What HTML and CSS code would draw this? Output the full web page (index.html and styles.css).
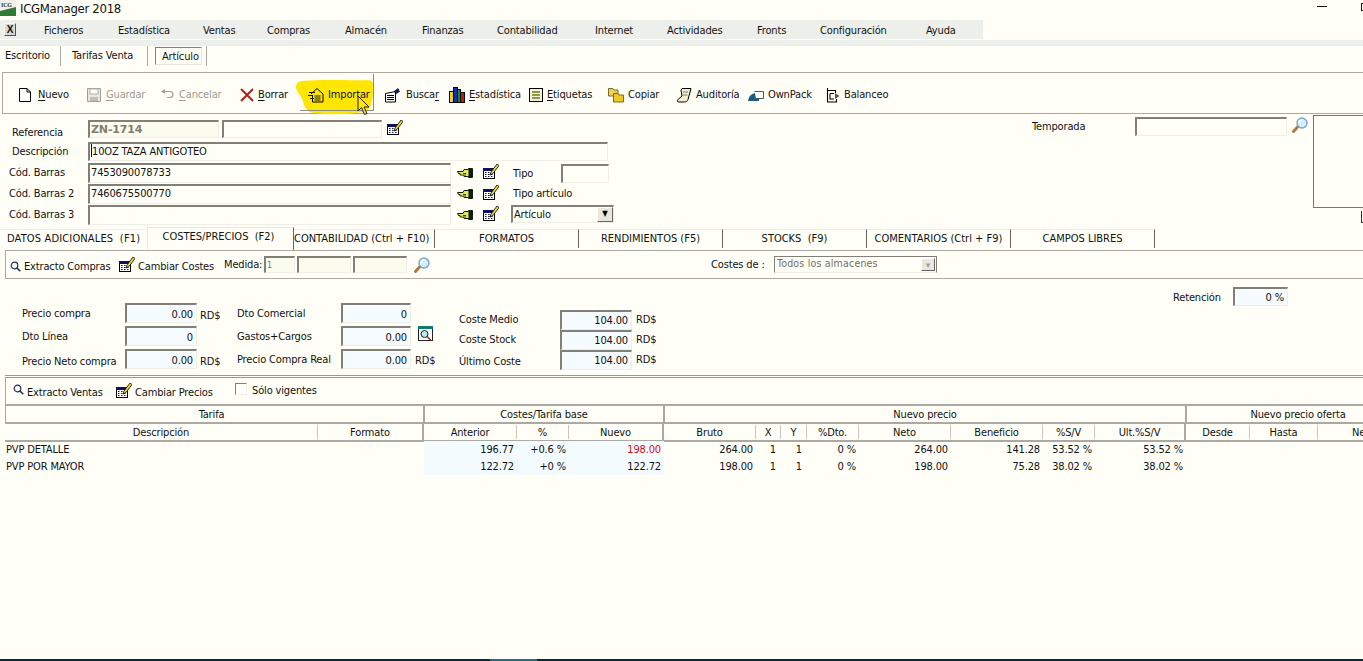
FILE: index.html
```html
<!DOCTYPE html>
<html lang="es">
<head>
<meta charset="utf-8">
<title>ICGManager 2018</title>
<link rel="stylesheet" href="styles.css">
</head>
<body>
<svg class="defs" aria-hidden="true">
  <symbol id="cal" viewBox="0 0 16 16">
    <rect x="0.5" y="4.5" width="11" height="10" fill="#fff" stroke="#000"/>
    <rect x="0" y="4" width="12" height="3" fill="#101060"/>
    <path d="M2 8.500h1.500M5 8.500h1.500M8 8.500h1.500M2 10.500h1.500M5 10.500h1.500M8 10.500h1.500M2 12.500h1.500M5 12.500h1.500M8 12.500h1.500" stroke="#101060"/>
    <path d="M14 0l2 1.500-6 8-3 1.500 1-3z" fill="#e8d830" stroke="#000" stroke-width="0.8"/>
  </symbol>
  <symbol id="glass" viewBox="0 0 16 16">
    <path d="M6 9.500L1.500 14.500" stroke="#b9763a" stroke-width="3" stroke-linecap="round"/>
    <circle cx="10" cy="6" r="5" fill="#d5ecfa" stroke="#7aa6c8" stroke-width="1.400"/>
    <path d="M7 6a3 3 0 0 1 3-3" stroke="#fff" stroke-width="1.400" fill="none"/>
  </symbol>
  <symbol id="lens" viewBox="0 0 11 11">
    <circle cx="4.500" cy="4.500" r="3.300" fill="#eef6ff" stroke="#26304a" stroke-width="1.200"/>
    <path d="M7 7l3.300 3.300" stroke="#26304a" stroke-width="1.600"/>
  </symbol>
  <symbol id="hand" viewBox="0 0 16 12">
    <path d="M0.500 4.500H6L7 2.500H11.500V1.500H15.500V10.500H11.500V9.500H7L5.500 8H3V6.500H1.500z" fill="#dfe85a" stroke="#10200a"/>
    <rect x="11.500" y="2" width="4" height="8" fill="#101a0a"/>
    <path d="M6 6.500h3M6 8h3" stroke="#10200a" stroke-width="0.800"/>
  </symbol>
</svg>

<div class="app">
  <header class="titlebar">
    <svg class="logo" width="16" height="16" viewBox="0 0 16 16" aria-hidden="true">
      <rect width="16" height="16" fill="#f0f0ea"/>
      <path d="M0 16V11L16 7V16z" fill="#2f7a35"/>
      <text x="1" y="7" class="logo-text">ICG</text>
    </svg>
    <span class="app-name">ICGManager 2018</span>
    <span class="win-min"></span>
    <span class="win-max"></span>
  </header>

  <nav class="menubar">
    <span class="close-x">X</span>
    <span>Ficheros</span><span>Estadística</span><span>Ventas</span><span>Compras</span><span>Almacén</span><span>Finanzas</span><span>Contabilidad</span><span>Internet</span><span>Actividades</span><span>Fronts</span><span>Configuración</span><span>Ayuda</span>
  </nav>
  <div class="menu-strip"></div>

  <div class="doc-tabs">
    <span class="doc-tab doc-esc">Escritorio</span>
    <span class="doc-tab doc-tar">Tarifas Venta</span>
    <span class="doc-tab doc-art"><b>Artículo</b></span>
  </div>

  <div class="toolbar">
    <div class="tool t-mid">
      <svg class="ti" viewBox="0 0 16 16"><path d="M2.500 1.500H10L13.500 5V14.500H2.500zM10 1.500V5H13.500" fill="#fff" stroke="#000"/></svg>
      <span><u>N</u>uevo</span>
    </div>
    <div class="tool off">
      <svg class="ti" viewBox="0 0 16 16"><path d="M1.500 1.500H14.500V14.500H1.500z" fill="#e8e8e0" stroke="#a0a098"/><rect x="4" y="2" width="8" height="5" fill="#fff" stroke="#b0b0a8"/><rect x="4" y="10" width="8" height="4" fill="#c0c0b8"/></svg>
      <span><u>G</u>uardar</span>
    </div>
    <div class="tool off t-tight">
      <svg class="ti" viewBox="0 0 16 16"><path d="M3 4.500H10A3 3 0 0 1 10 10.500H7" fill="none" stroke="#a0a098" stroke-width="1.200"/><path d="M1 4.500L5 2V7z" fill="#a0a098"/></svg>
      <span><u>C</u>ancelar</span>
    </div>
    <div class="tool t-tight">
      <svg class="ti" viewBox="0 0 16 16"><path d="M2 2L14 14M14 2L2 14" stroke="#b02018" stroke-width="2"/></svg>
      <span><u>B</u>orrar</span>
    </div>
    <div class="tool">
      <svg class="ti" viewBox="0 0 16 16"><path d="M3 7L9 1.500L15 7V15H4.500V8" fill="none" stroke="#000"/><path d="M6.500 9h6M6.500 11h6M6.500 13h6M1 5.500h6M0 8.500h5M2 11.500h4" stroke="#000" stroke-width="0.900"/></svg>
      <span>Importar</span>
    </div>
    <div class="tool t-wide">
      <svg class="ti" viewBox="0 0 16 16"><path d="M1.500 6.500L11.500 4.500V15H1.500z" fill="#fff" stroke="#000"/><path d="M3 8.500h7M3 10.500h7M3 12.500h7" stroke="#000"/><path d="M10 4.500l4-3 1.500 3-3 2z" fill="#102060" stroke="#000" stroke-width="0.600"/></svg>
      <span>Busca<u>r</u></span>
    </div>
    <div class="tool">
      <svg class="ti" viewBox="0 0 16 16"><rect x="0.500" y="4.500" width="4" height="11" fill="#f0d020" stroke="#000"/><rect x="4.500" y="0.500" width="4" height="15" fill="#1030b0" stroke="#000"/><rect x="8.500" y="2.500" width="3" height="13" fill="#109030" stroke="#000"/><rect x="11.500" y="5.500" width="4" height="10" fill="#c01818" stroke="#000"/></svg>
      <span><u>E</u>stadística</span>
    </div>
    <div class="tool t-tight">
      <svg class="ti" viewBox="0 0 16 16"><rect x="1.500" y="1.500" width="13" height="13" fill="#f4f4d8" stroke="#000"/><path d="M4 5h8M4 8h8M4 11h8" stroke="#8a9a40" stroke-width="2"/></svg>
      <span><u>E</u>tiquetas</span>
    </div>
    <div class="tool">
      <svg class="ti" viewBox="0 0 16 16"><path d="M0.500 1.500H5L6 3H10V9H0.500z" fill="#ecd060" stroke="#7a6a20"/><path d="M5.500 6.500H10L11 8H15.500V15H5.500z" fill="#f0c820" stroke="#7a6a20"/></svg>
      <span>Copiar</span>
    </div>
    <div class="tool">
      <svg class="ti" viewBox="0 0 16 16"><path d="M6 1.500H15L12 12.500C12 14 10 15 8.500 15H2.500C1 15 1 12.500 2.500 12L6 9L5 3z" fill="#f4eed0" stroke="#000"/><path d="M7 5h5M6.500 8h5" stroke="#807a60"/></svg>
      <span>Auditoría</span>
    </div>
    <div class="tool">
      <svg class="ti" viewBox="0 0 16 16"><path d="M0 14C1 9 3 7 7 6H11V14z" fill="#1a5e80"/><path d="M6.500 4.500H15.500V11.500H8" fill="#fff" stroke="#4a5a66"/></svg>
      <span>OwnPack</span>
    </div>
    <div class="tool t-tight">
      <svg class="ti" viewBox="0 0 16 16"><path d="M2.500 1V15H11.500V12M2.500 3.500H10.500V6M5 6.500H9M5 6.500V12H9" fill="none" stroke="#000" stroke-width="1.100"/><path d="M10 6L14.500 9 10 12z" fill="#555"/></svg>
      <span>Balanceo</span>
    </div>
    <svg class="marker" width="78" height="35" viewBox="0 0 78 35" aria-hidden="true"><path d="M6 1C25-1 60 1 72 0 78 0 78 6 77 12 76 22 76 28 70 31 56 35 36 35 18 33 10 32 8 26 7 21 5 15 0 12 0 7 0 3 3 1 6 1z" fill="#ffe600"/></svg>
    <span class="focus-frame"></span>
    <svg class="cursor" width="15" height="21" viewBox="0 0 15 21" aria-hidden="true"><path d="M1 1V16L4.500 12.500 7.500 19.500 10 18.500 7 12H12z" fill="#ffe600" stroke="#222" stroke-width="1"/></svg>
  </div>

  <section class="form">
    <div class="form-left">
      <div class="frow r1">
        <label class="lab lab-a">Referencia</label>
        <span class="inp ref"><b>ZN-1714</b></span>
        <span class="inp ref2"></span>
        <svg class="ic cal1"><use href="#cal"/></svg>
      </div>
      <div class="frow r2">
        <label class="lab lab-a">Descripción</label>
        <span class="inp desc"><i class="caret"></i>10OZ TAZA ANTIGOTEO</span>
      </div>
      <div class="frow r3">
        <label class="lab lab-b">Cód. Barras</label>
        <span class="inp code">7453090078733</span>
        <svg class="ic hand"><use href="#hand"/></svg>
        <svg class="ic cal2"><use href="#cal"/></svg>
        <label class="side-lab">Tipo</label>
        <span class="inp tipo"></span>
      </div>
      <div class="frow r4">
        <label class="lab lab-b">Cód. Barras 2</label>
        <span class="inp code">7460675500770</span>
        <svg class="ic hand"><use href="#hand"/></svg>
        <svg class="ic cal2"><use href="#cal"/></svg>
        <label class="side-lab up">Tipo artículo</label>
      </div>
      <div class="frow r5">
        <label class="lab lab-b">Cód. Barras 3</label>
        <span class="inp code"></span>
        <svg class="ic hand"><use href="#hand"/></svg>
        <svg class="ic cal2"><use href="#cal"/></svg>
        <span class="combo"><span class="combo-text">Artículo</span><span class="combo-btn">▼</span></span>
      </div>
    </div>
    <div class="form-right">
      <label class="temp-lab">Temporada</label>
      <span class="inp temp"></span>
      <svg class="ic mag-t"><use href="#glass"/></svg>
      <div class="picture-col">
        <div class="picture"></div>
        <span class="pic-frag"></span>
      </div>
    </div>
  </section>

  <div class="tabs">
    <span class="tab first">DATOS ADICIONALES&nbsp; (F1)</span>
    <span class="tab active">COSTES/PRECIOS&nbsp; (F2)</span>
    <span class="tab t3">CONTABILIDAD (Ctrl + F10)</span>
    <span class="tab">FORMATOS</span>
    <span class="tab">RENDIMIENTOS (F5)</span>
    <span class="tab">STOCKS&nbsp; (F9)</span>
    <span class="tab">COMENTARIOS (Ctrl + F9)</span>
    <span class="tab">CAMPOS LIBRES</span>
  </div>

  <div class="subbar buy">
    <svg class="lens"><use href="#lens"/></svg>
    <span class="sb-t1">Extracto Compras</span>
    <svg class="ic sb-cal"><use href="#cal"/></svg>
    <span class="sb-t2">Cambiar Costes</span>
    <span class="sb-med">Medida:</span>
    <span class="inp m1">1</span>
    <span class="inp m2"></span>
    <span class="inp m2"></span>
    <svg class="ic sb-mag"><use href="#glass"/></svg>
    <span class="sb-cos">Costes de :</span>
    <span class="combo off-combo"><span class="combo-text">Todos los almacenes</span><span class="combo-btn">▾</span></span>
  </div>

  <section class="prices">
    <div class="pcol pa">
      <label>Precio compra</label><span class="inp num">0.00</span><span class="unit">RD$</span>
      <label class="ln2">Dto Línea</label><span class="inp num">0</span><span></span>
      <label class="ln3">Precio Neto compra</label><span class="inp num">0.00</span><span class="unit">RD$</span>
    </div>
    <div class="pcol pb">
      <label>Dto Comercial</label><span class="inp num">0</span><span></span>
      <label>Gastos+Cargos</label><span class="inp num">0.00</span>
      <svg class="doc-lens" width="15" height="15" viewBox="0 0 15 15" aria-hidden="true"><rect x="0.500" y="0.500" width="14" height="14" fill="#fff" stroke="#222"/><rect width="15" height="3" fill="#0f7a70"/><circle cx="6.500" cy="8" r="3.500" fill="#bfe6ea" stroke="#222"/><path d="M9 10.500l4 4" stroke="#a02020" stroke-width="1.500"/></svg>
      <label>Precio Compra Real</label><span class="inp num">0.00</span><span class="unit">RD$</span>
    </div>
    <div class="pcol pc">
      <label>Coste Medio</label><span class="inp num">104.00</span><span class="unit">RD$</span>
      <label>Coste Stock</label><span class="inp num">104.00</span><span class="unit">RD$</span>
      <label class="ln3">Último Coste</label><span class="inp num">104.00</span><span class="unit">RD$</span>
    </div>
    <div class="pcol pd">
      <label>Retención</label><span class="inp num">0 %</span>
    </div>
  </section>

  <div class="double-rule"></div>

  <div class="subbar sell">
    <svg class="lens"><use href="#lens"/></svg>
    <span class="sv-t1">Extracto Ventas</span>
    <svg class="ic sv-cal"><use href="#cal"/></svg>
    <span class="sv-t2">Cambiar Precios</span>
    <span class="check"></span>
    <span class="check-lab">Sólo vigentes</span>
  </div>

  <section class="grid">
    <div class="grow head1">
      <span class="s2">Tarifa</span>
      <span class="s3">Costes/Tarifa base</span>
      <span class="s8">Nuevo precio</span>
      <span class="s3 last">Nuevo precio oferta</span>
    </div>
    <div class="grow head2">
      <span>Descripción</span><span>Formato</span><span>Anterior</span><span>%</span><span>Nuevo</span><span>Bruto</span><span>X</span><span>Y</span><span>%Dto.</span><span>Neto</span><span>Beneficio</span><span>%S/V</span><span>Ult.%S/V</span><span>Desde</span><span>Hasta</span><span>Neto</span>
    </div>
    <div class="grow data">
      <span class="tx">PVP DETALLE</span><span></span><span class="base">196.77</span><span class="base">+0.6 %</span><span class="base red">198.00</span><span>264.00</span><span class="one">1</span><span class="one">1</span><span>0 %</span><span>264.00</span><span>141.28</span><span>53.52 %</span><span>53.52 %</span><span></span><span></span><span></span>
    </div>
    <div class="grow data">
      <span class="tx">PVP POR MAYOR</span><span></span><span class="base">122.72</span><span class="base">+0 %</span><span class="base">122.72</span><span>198.00</span><span class="one">1</span><span class="one">1</span><span>0 %</span><span>198.00</span><span>75.28</span><span>38.02 %</span><span>38.02 %</span><span></span><span></span><span></span>
    </div>
  </section>

  <div class="spacer"></div>
  <div class="taskbar"><span class="task-active"></span></div>
</div>
</body>
</html>
```

FILE: styles.css
```css
* { box-sizing: border-box; }
html, body { margin: 0; height: 100%; overflow: hidden; }
body {
  background: #fffff8;
  color: #111;
  font: 11px/14px "DejaVu Sans Condensed", "DejaVu Sans", sans-serif;
  font-stretch: condensed;
  letter-spacing: -0.15px;
}
.defs { position: absolute; width: 0; height: 0; }
.app { display: flex; flex-direction: column; height: 661px; width: 1363px; overflow: hidden; }
svg { display: block; flex: none; }

/* title bar */
.titlebar { height: 20px; display: flex; align-items: center; flex: none; }
.logo { margin-top: -4px; }
.logo-text { font: bold 6px "Liberation Serif", serif; fill: #333; }
.app-name { margin: -2px 0 0 4px; width: 93px; font-size: 13px; white-space: nowrap; letter-spacing: -0.3px; }
.win-min { margin: -7px 0 0 1204px; width: 10px; height: 1px; background: #111; flex: none; }
.win-max { margin: -6px 0 0 34px; width: 8px; height: 8px; border: 1px solid #111; flex: none; }

/* menu */
.menubar {
  flex: none;
  height: 20px;
  width: 983px;
  background: #edf0ea;
  border-bottom: 1px solid #fff;
  display: grid;
  grid-template-columns: 44px 74px 85px 64px 78px 77px 75px 98px 72px 90px 63px 106px 100px;
  align-items: center;
}
.menubar span { padding-top: 2px; }
.menubar .close-x {
  margin-left: 4px;
  padding: 0;
  width: 12px;
  height: 13px;
  background: #d8d8d0;
  border: 1px solid #666;
  border-color: #f8f8f0 #555 #555 #f8f8f0;
  font: bold 10px/11px "Liberation Sans", sans-serif;
  text-align: center;
}
.menu-strip { flex: none; height: 6px; background: #edf0ea; }

/* document tabs */
.doc-tabs { flex: none; height: 26px; display: flex; }
.doc-tab { height: 20px; padding-top: 3px; border-right: 1px solid #a8a8a0; }
.doc-esc { width: 61px; padding-left: 5px; }
.doc-tar { width: 87px; padding-left: 11px; }
.doc-art { width: 59px; padding: 1px 4px 0 7px; }
.doc-art b {
  display: block;
  font-weight: normal;
  height: 18px;
  width: 47px;
  padding: 2px 0 0 6px;
  border: 1px solid #808078;
  border-color: #808078 #e8e8e0 #e8e8e0 #808078;
}

/* main toolbar */
.toolbar {
  flex: none;
  position: relative;
  height: 42px;
  margin-left: 2px;
  border: 1px solid #aaaaa2;
  border-width: 1px 0 1px 1px;
  padding: 4px 0 0 14px;
  display: grid;
  grid-template-columns: 69px 74px 79px 69px 76px 65px 79px 80px 68px 72px 77px 70px;
  align-items: center;
}
.tool { display: flex; align-items: center; gap: 4px; position: relative; z-index: 2; }
.t-mid { gap: 5px; }
.t-wide { gap: 6px; }
.t-tight { gap: 3px; }
.ti { width: 16px; height: 16px; }
.tool u { text-underline-offset: 2px; }
.off { color: #9c9c94; }
.marker { position: absolute; left: 293px; top: 7px; z-index: 1; }
.focus-frame {
  position: absolute;
  left: 297px;
  top: 1px;
  width: 74px;
  height: 37px;
  border: 1px solid #8a8a82;
  border-width: 0 1px 1px 0;
  z-index: 3;
}
.cursor { position: absolute; left: 354px; top: 22px; z-index: 4; }

/* inputs */
.inp {
  display: block;
  flex: none;
  background: #fffff8;
  border: 1px solid #eeeee6;
  border-top: 2px solid #808078;
  border-left: 2px solid #808078;
  padding-left: 1px;
  line-height: 15px;
  white-space: nowrap;
  overflow: hidden;
}
.num { background: #f5fbff; text-align: right; padding-right: 3px; line-height: 16px; }
.caret { display: inline-block; width: 1px; height: 13px; background: #111; vertical-align: -2px; }

/* form */
.form { flex: none; height: 113px; display: flex; }
.form-left { flex: none; width: 620px; padding-top: 6px; display: flex; flex-direction: column; }
.frow { display: flex; align-items: flex-start; flex: none; }
.r1 { height: 18px; }
.r2 { height: 19px; margin-top: 4px; }
.r3 { height: 20px; margin-top: 2px; }
.r4 { height: 20px; margin-top: 1px; }
.r5 { height: 19px; margin-top: 1px; }
.lab { width: 88px; flex: none; padding-top: 3px; white-space: nowrap; }
.lab-a { padding-left: 12px; }
.r1 .lab { padding-top: 6px; }
.lab-b { padding-left: 9px; }
.ref { width: 131px; height: 18px; background: #fbfbee; color: #807f6e; margin-right: 3px; }
.ref b { font: bold 11px/14px "DejaVu Sans", sans-serif; }
.ref2 { width: 160px; height: 18px; }
.cal1 { margin: 0 0 0 5px; }
.ic { width: 16px; height: 16px; }
.desc { width: 520px; height: 19px; }
.code { width: 363px; height: 20px; }
.hand { margin: 4px 0 0 6px; height: 12px; }
.cal2 { margin: 1px 0 0 10px; }
.side-lab { margin: 4px 0 0 14px; width: 48px; white-space: nowrap; }
.side-lab.up { margin-top: 3px; }
.tipo { width: 48px; height: 19px; margin-top: 1px; }
.combo { display: flex; flex: none; border: 1px solid #eeeee6; border-top: 2px solid #808078; border-left: 2px solid #808078; }
.r5 .combo { width: 103px; height: 18px; margin-left: 12px; }
.combo-text { flex: 1; padding-left: 1px; line-height: 15px; }
.combo-btn { width: 16px; background: #e8e8e0; border: 1px solid #888; border-color: #fff #666 #666 #fff; font-size: 8px; line-height: 12px; text-align: center; color: #000; }
.form-right { flex: none; width: 331px; margin-left: 412px; display: flex; align-items: flex-start; }
.temp-lab { flex: none; width: 103px; padding-top: 6px; }
.temp { width: 152px; height: 19px; margin-top: 3px; }
.mag-t { margin: 3px 0 0 5px; }
.picture-col { margin: 1px 0 0 5px; flex: none; width: 50px; display: flex; flex-direction: column; }
.picture { height: 93px; border: 1px solid #777770; border-right: 0; }
.pic-frag { height: 12px; width: 2px; margin: 3px 0 0 48px; border: 1px solid #333; border-width: 0 0 1px 1px; }

/* section tabs */
.tabs { flex: none; height: 23px; display: grid; grid-template-columns: 147px 147px 141px 144px 144px 144px 144px 144px; letter-spacing: 0; }
.tab {
  height: 19px;
  margin-top: 2px;
  text-align: center;
  line-height: 18px;
  border-top: 1px solid #eeeee6;
  border-right: 1px solid #66665e;
  white-space: nowrap;
}
.tab.first { text-align: left; padding-left: 7px; border-right: 0; letter-spacing: .15px; }
.tab.active { height: 23px; margin: 0; padding-right: 4px; border-left: 1px solid #e8e8e0; border-top: 1px solid #e8e8e0; line-height: 18px; }
.tab.t3 { text-align: left; padding-left: 0; }

/* sub toolbars */
.subbar { flex: none; display: flex; align-items: center; margin-left: 5px; border: 1px solid #aaaaa2; border-right: 0; }
.buy { height: 29px; }
.sell { height: 26px; border-top: 0; border-bottom: 0; }
.lens { width: 11px; height: 11px; }
.buy .lens { margin: 3px 0 0 4px; }
.sb-t1 { margin-left: 3px; width: 86px; white-space: nowrap; padding-top: 4px; }
.sb-cal { margin-left: 9px; }
.sb-t2 { margin-left: 3px; width: 75px; white-space: nowrap; padding-top: 4px; }
.sb-med { margin-left: 11px; width: 40px; }
.m1 { width: 31px; height: 17px; font-size: 9px; color: #777; background: #fbfbee; }
.m2 { width: 54px; height: 17px; margin-left: 2px; background: #fbfbee; }
.sb-mag { margin-left: 7px; }
.sb-cos { margin-left: 281px; width: 63px; white-space: nowrap; }
.off-combo { width: 163px; height: 17px; border-width: 1px; border-color: #808078 #808078 #eeeee6 #808078; }
.off-combo .combo-text { color: #707068; padding: 0 0 0 2px; line-height: 13px; letter-spacing: .2px; font-size: 10.500px; }
.off-combo .combo-btn { width: 14px; color: #999; margin: 1px; font-size: 9px; }
.sell .lens { margin: -3px 0 0 7px; }
.sv-t1 { margin-left: 3px; width: 78px; white-space: nowrap; padding-top: 3px; }
.sv-cal { margin-left: 11px; }
.sv-t2 { margin-left: 3px; width: 77px; padding-top: 3px; white-space: nowrap; }
.check { margin-left: 23px; width: 12px; height: 12px; margin-top: -4px; border: 1px solid #eee; border-top: 1px solid #808078; border-left: 1px solid #808078; }
.check-lab { margin: -1px 0 0 5px; }

/* prices */
.prices { flex: none; height: 96px; display: flex; align-items: flex-start; }
.pcol { display: grid; align-items: center; }
.pa { margin-left: 22px; width: 215px; padding-top: 24px; grid-template-columns: 103px 72px 40px; grid-auto-rows: 20px; row-gap: 3px; }
.pb { width: 222px; padding-top: 24px; grid-template-columns: 104px 70px 48px; grid-auto-rows: 20px; row-gap: 3px; }
.pc { width: 714px; padding-top: 31px; grid-template-columns: 101px 72px 40px; grid-auto-rows: 20px; row-gap: 0; }
.pd { padding-top: 8px; grid-template-columns: 60px 55px; grid-auto-rows: 19px; }
.pcol .inp { height: 100%; }
.pa .inp, .pb .inp { padding-top: 1px; line-height: 17px; }
.pc .inp, .pd .inp { line-height: 17px; }
.pa label, .pb label { padding-top: 2px; }
.pa .unit { padding: 6px 0 0 3px; }
.pb .unit { padding: 3px 0 0 4px; }
.pc .unit { padding: 0 0 0 4px; }
.ln3 { margin-top: 4px; }
.pd label { padding-top: 2px; }
.doc-lens { margin-left: 7px; margin-top: -5px; }
.pcol label { white-space: nowrap; }

.double-rule { flex: none; height: 3px; margin-left: 5px; border-top: 1px solid #9a9a92; border-bottom: 1px solid #9a9a92; }

/* data grid */
.grid { flex: none; margin-left: 5px; }
.grow {
  display: grid;
  grid-template-columns: 313px 106px 93px 52px 95px 92px 25px 26px 52px 92px 92px 52px 91px 64px 68px 92px;
  width: 1405px;
}
.s2 { grid-column: span 2; padding-right: 6px; }
.s3 { grid-column: span 3; }
.s8 { grid-column: span 8; }
.head1 { height: 20px; border-top: 2px solid #aaaaa2; border-bottom: 2px solid #aaaaa2; border-left: 1px solid #aaaaa2; }
.head1 span { text-align: center; line-height: 17px; border-right: 2px solid #aaaaa2; }
.head2 { height: 18px; border-bottom: 2px solid #aaaaa2; }
.head2 span { text-align: center; border-right: 1px solid #c4c4bc; height: 14px; line-height: 15px; margin-top: 1px; }
.head2 span:nth-child(2), .head2 span:nth-child(5), .head2 span:nth-child(13) { border-right: 2px solid #aaaaa2; height: 16px; margin-top: 0; padding-top: 1px; }
.data { height: 17px; }
.data:nth-child(3) { margin-top: -1px; }
.data span { text-align: right; padding-right: 3px; line-height: 17px; white-space: nowrap; }
.data .tx { text-align: left; padding: 0 0 0 1px; }
.data .base { background: #f4fbff; }
.data .red { color: #d01010; }
.data .one { padding-right: 5px; }

.spacer { flex: 1; }
.taskbar { flex: none; height: 2px; background: #0d2733; padding-left: 490px; }
.task-active { display: block; width: 47px; height: 2px; background: #1f6f80; }
```
